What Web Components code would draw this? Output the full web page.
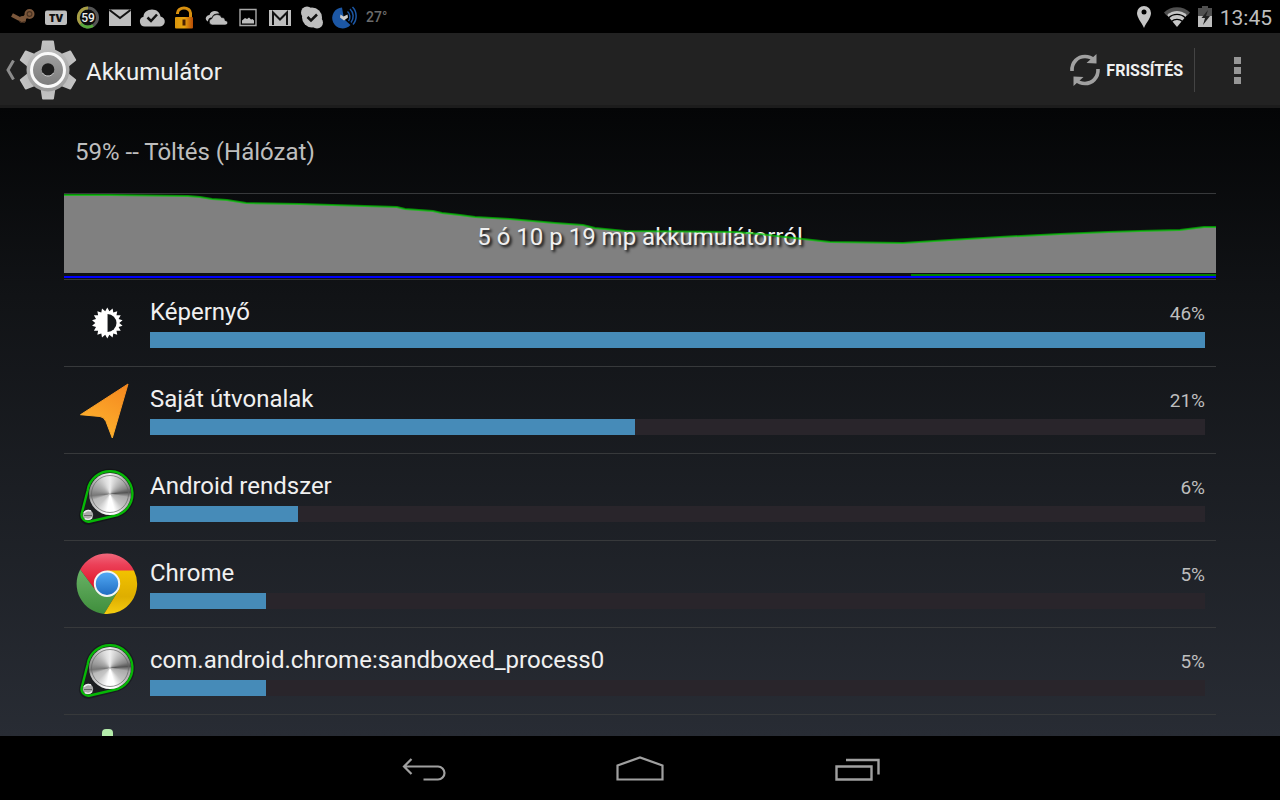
<!DOCTYPE html>
<html lang="hu">
<head>
<meta charset="UTF-8">
<meta name="viewport" content="width=device-width, initial-scale=1.0">
<title>Akkumulátor</title>
<style>
    :root {
        --text: #f0f0f0;
        --text-dim: #bebebe;
        --line: #37393b;
        --accent: #468bb8;
    }
    body {
        margin: 0;
        background: #000;
        color: var(--text);
        font-family: Roboto, "Noto Sans", sans-serif;
        font-size: 24px;
    }
</style>
</head>
<body>
<settings-screen></settings-screen>

<script>
// ==== Icons ====
// Points of a spiky circle, used by the display icon
function starPoints(cx, cy, outer, inner, spikes) {
    const points = [];
    for (let i = 0; i < spikes * 2; i++) {
        const r = i % 2 ? inner : outer;
        const a = Math.PI * i / spikes - Math.PI / 2;
        points.push((cx + r * Math.cos(a)).toFixed(2) + ',' + (cy + r * Math.sin(a)).toFixed(2));
    }
    return points.join(' ');
}

const gearTooth = '<path d="M25 .5h10q.8 0 .9.800l1.600 10.200h-15l1.600-10.200q.1-.8.9-.8z"/>';

const icons = {
    // status bar
    steam: { box: [32, 32], art: `
        <path d="M4 14l9.500 5M13 20l7-6.500" fill="none" stroke="#7b573b" stroke-width="4"/>
        <circle cx="14.500" cy="18.500" r="3.500" fill="#7b573b"/>
        <circle cx="21.500" cy="13" r="4" fill="#4a3322" stroke="#7b573b" stroke-width="2"/>
        <circle cx="21.500" cy="13" r="1.800" fill="#7b573b"/>
        <path d="M11 19.500a3.500 3.500 0 0 0 5.500 1" fill="none" stroke="#2b1d14"/>` },
    tv: { box: [32, 32], art: `
        <rect x="5" y="9.500" width="22" height="14.500" rx="2" fill="#bebebe"/>
        <text x="16" y="21" text-anchor="middle" font-family="Open Sans, sans-serif" font-size="11" font-weight="800" fill="#111">TV</text>` },
    level: { box: [32, 32], art: `
        <circle cx="16" cy="16.500" r="9.500" fill="#0c0c0c" stroke="#555" stroke-width="3"/>
        <path d="M16 7a9.500 9.500 0 0 0-7 16" fill="none" stroke="#a79e43" stroke-width="3"/>
        <path d="M9 23a9.500 9.500 0 0 0 12 1.500" fill="none" stroke="#56a83b" stroke-width="3"/>
        <text x="16" y="21" text-anchor="middle" font-family="Roboto, sans-serif" font-size="12" font-weight="500" fill="#eee">59</text>` },
    mail: { box: [32, 32], art: `
        <path d="M5 8.500h22V25H5z" fill="#bebebe"/>
        <path d="M5.500 9L16 17l10.500-8" fill="none" stroke="#111" stroke-width="2"/>` },
    cloudCheck: { box: [32, 32], art: `
        <path d="M9 25.500a5 5 0 0 1-1.500-9.800C7.500 11.500 11.500 8.500 16 8.500c4.500 0 8 2.800 8.500 7A5 5 0 0 1 23 25.500z" fill="#bebebe"/>
        <path d="M11.500 16.500l3.500 3.500 6-6.500" fill="none" stroke="#111" stroke-width="2.500"/>` },
    lock: { box: [32, 32], art: `
        <defs><linearGradient id="lock"><stop stop-color="#d8940c"/><stop offset=".5" stop-color="#e9a50f"/><stop offset="1" stop-color="#b84c06"/></linearGradient></defs>
        <path d="M9.500 13v-1a6.500 5 0 0 1 13 0v5" fill="none" stroke="#d8900f" stroke-width="3"/>
        <rect x="7" y="16" width="18" height="11.500" rx="1" fill="url(#lock)"/>
        <path d="M14.500 18.500h3v6h-3z" fill="#4a2202"/>` },
    clouds: { box: [32, 32], art: `
        <path d="M7 20a3.500 3.500 0 0 1 0-5c1-1 2-1 2.500-1 1-4.500 7.500-5.500 10-1.500-4-.5-7 1-7.500 4-3 0-4 2-4 4z" fill="#bebebe"/>
        <path d="M12 24a3.300 3.300 0 0 1 0-6.500c.5-4.500 8-5.500 9.500-1 3 0 3.500 1.500 3.500 3 3.500 0 3.500 4.500 0 4.500z" fill="#bebebe" stroke="#000" stroke-width=".6"/>` },
    image: { box: [32, 32], art: `
        <path d="M8 8.500h16v16H8z" fill="none" stroke="#a8a8a8" stroke-width="1.400"/>
        <path d="M10 22.500v-3l3-2.500 2 1 2-1.500 2 2 1.500-.5 1.500 1.500v3z" fill="#bebebe"/>` },
    gmail: { box: [32, 32], art: `
        <path d="M5 9h22v16H5z" fill="#bebebe"/>
        <path d="M9 24V11.500l7 7 7-7V24" fill="none" stroke="#111" stroke-width="2"/>` },
    skype: { box: [32, 32], art: `
        <circle cx="16" cy="16.500" r="10" fill="#bebebe"/>
        <circle cx="11" cy="11.500" r="6" fill="#bebebe"/>
        <circle cx="21" cy="21.500" r="6" fill="#bebebe"/>
        <path d="M11.500 16l3.500 3.500 6-6" fill="none" stroke="#111" stroke-width="2.500"/>` },
    dish: { box: [32, 32], art: `
        <path d="M14 6.500a10.500 10.500 0 1 0 8.500 17.500L16 18z" fill="#1c57a5"/>
        <path d="M12.500 13.500l3 2 4-2 .5 3-4 3-4-3z" fill="#ccc"/>
        <path d="M19.500 10.500a7 7 0 0 1 1 9.500M22 8a10 10 0 0 1 1 13.500M24.500 6a13 13 0 0 1 .5 17.500" fill="none" stroke="#1c57a5" stroke-width="1.500"/>` },
    pin: { box: [16, 32], art: `
        <path d="M8 27C5.500 21 1 17 1 12a7 7 0 0 1 14 0c0 5-4.500 9-7 15z" fill="#c6c6c6"/>
        <circle cx="8" cy="11" r="2.500" fill="#000"/>` },
    wifi: { box: [26, 32], art: `
        <path d="M0 11.500a18.500 18.500 0 0 1 26 0l-2.500 3a15 15 0 0 0-21 0z" fill="#505050"/>
        <path d="M3 14a14.500 14.500 0 0 1 20 0L13 26z" fill="#c6c6c6"/>
        <path d="M4.500 17a12 12 0 0 1 17 0M7.500 20.500a8 8 0 0 1 11 0" fill="none" stroke="#000" stroke-width="1.200"/>` },
    battery: { box: [14, 32], art: `
        <path d="M0 7h4V5h6v2h4v8H0z" fill="#505050"/>
        <path d="M0 15h14v11H0z" fill="#bebebe"/>
        <path d="M10 9L3.500 17H7l-2 7 7-9H8z" fill="#222"/>` },
    // action bar
    up: { box: [10, 20], art: `
        <path d="M8.500 .5L3 10l5.500 9.500" fill="none" stroke="#8c8c8c" stroke-width="3"/>` },
    gear: { box: [60, 60], art: `
        <defs>
            <linearGradient id="metal" x2="0" y2="60" gradientUnits="userSpaceOnUse"><stop stop-color="#c4c4c4"/><stop offset="1" stop-color="#939393"/></linearGradient>
            <linearGradient id="hub" x2="0" y2="1"><stop stop-color="#a0a0a0"/><stop offset="1" stop-color="#7c7c7c"/></linearGradient>
        </defs>
        <g fill="url(#metal)">
            ${[0, 60, 120, 180, 240, 300].map(a => `<g transform="rotate(${a} 30 30)">${gearTooth}</g>`).join('')}
            <circle cx="30" cy="30" r="21.500"/>
        </g>
        <circle cx="30" cy="30" r="16.500" fill="url(#hub)" stroke="#fafafa" stroke-width="3"/>
        <circle cx="30" cy="29.500" r="6.300" fill="#1d1d1d"/>
        <path d="M24.500 33a6.500 6.500 0 0 0 11 0" fill="none" stroke="#ccc"/>` },
    refresh: { box: [32, 36], art: `
        <g fill="none" stroke="#a0a0a0" stroke-width="3.600">
            <path d="M3 19C2.500 10 9 4.500 16 4.500c4 0 6.500 1 9 3.500"/>
            <path d="M29 17c.5 9-6 14.500-13 14.500-4 0-6.500-1-9-3.500"/>
        </g>
        <path d="M27.500 2v9.500l-10-.5zM4.500 34v-9.500l10 .5z" fill="#a0a0a0"/>` },
    more: { box: [8, 28], art: `
        <path d="M0 1h7v7H0zM0 11h7v7H0zM0 21h7v7H0z" fill="#969696"/>` },
    // list
    display: { box: [64, 64], art: `
        <polygon points="${starPoints(32.3, 32, 15.5, 12, 18)}" fill="#fff"/>
        <path d="M32.500 23a9 9 0 0 1 0 18z" fill="#14171a"/>
        <path d="M32.500 23v18" stroke="#999"/>` },
    arrow: { box: [64, 64], art: `
        <defs><linearGradient id="sun" x1=".8" y1="0" x2=".3" y2="1"><stop stop-color="#f58a20"/><stop offset="1" stop-color="#ffb52e"/></linearGradient></defs>
        <path d="M53 6L37.300 60 31 43.500q-2-4.500-6-5L5.500 36.700z" fill="url(#sun)" stroke="url(#sun)" stroke-linejoin="round"/>` },
    knob: { box: [64, 64], art: `
        <path d="M12.700 25.200A22.500 22.500 0 1 1 38.500 51L15 57A6.800 6.800 0 0 1 6.600 49z" fill="#1a1c1e" stroke="#000" stroke-opacity=".3" stroke-width="5"/>
        <path d="M12.700 25.200A22.500 22.500 0 1 1 38.500 51L15 56.500A6.800 6.800 0 0 1 6.600 49z" fill="#1c1e20" stroke="#06b806" stroke-width="2.400" stroke-linejoin="round"/>
        <foreignObject x="14" y="8" width="42" height="42">
            <div style="height: 42px; border-radius: 50%; background: conic-gradient(#eee, #ccc 25deg, #aaa 50deg, #888 70deg, #555 85deg, #aaa 100deg, #c4c4c4 135deg, #fff 165deg, #fff 190deg, #c8c8c8 225deg, #bbb 250deg, #777 265deg, #999 285deg, #b4b4b4 310deg, #ddd 340deg, #eee)"></div>
        </foreignObject>
        <circle cx="35" cy="29" r="18.500" fill="none" stroke="#666" stroke-opacity=".7"/>
        <circle cx="13" cy="50" r="5.200" fill="#aaa"/>
        <path d="M9 48a5 4 0 0 1 7-2M10 53.500a5 4 0 0 0 7-1" fill="none" stroke="#eee" stroke-width="1.500"/>
        <path d="M9 50.500h8" stroke="#666"/>` },
    chrome: { box: [64, 64], art: `
        <defs>
            <linearGradient id="red" x2="0" y2="1"><stop stop-color="#f0687c"/><stop offset=".3" stop-color="#ec4058"/><stop offset="1" stop-color="#dd0e20"/></linearGradient>
            <linearGradient id="green" x2="0" y2="1"><stop stop-color="#69b266"/><stop offset="1" stop-color="#3f8e3c"/></linearGradient>
            <linearGradient id="yellow" x2="0" y2="1"><stop stop-color="#f2c200"/><stop offset=".6" stop-color="#deae00"/><stop offset="1" stop-color="#f5cc10"/></linearGradient>
            <linearGradient id="blue" x2="0" y2="1"><stop stop-color="#53aaf6"/><stop offset="1" stop-color="#1f6cc0"/></linearGradient>
        </defs>
        <path d="M5.200 17.500A30.200 30.200 0 0 1 59 18.400L32 32 20.500 38.500z" fill="url(#red)"/>
        <path d="M5.200 17.500A30.200 30.200 0 0 0 29 61.900L43.500 38.300 32 32 20.500 38.300z" fill="url(#green)"/>
        <path d="M32 18.400H59A30.200 30.200 0 0 1 29 61.900L43.500 38.300z" fill="url(#yellow)"/>
        <circle cx="32" cy="31.700" r="12.200" fill="url(#blue)" stroke="#f4f4f4" stroke-width="2"/>` },
    flower: { box: [64, 64], art: `
        <rect x="27" y="3" width="11" height="24" rx="4" fill="#b4ecab"/>` },
    // navigation bar
    back: { box: [48, 32], art: `
        <path d="M3.500 14.500H38a6.500 6.500 0 0 1 0 13H23.500M11.500 7l-7.500 7.500 7.500 7.500" fill="none" stroke="#a0a0a0" stroke-width="2.200"/>` },
    home: { box: [48, 32], art: `
        <path d="M1.500 27.500V13.500L24 5.500l22.500 8v14z" fill="none" stroke="#a0a0a0" stroke-width="2.200"/>` },
    recents: { box: [48, 32], art: `
        <path d="M4.500 14.500h35v13h-35zM14 8h32.500v14.500" fill="none" stroke="#a0a0a0" stroke-width="2.400"/>` }
};

// ==== Web Component: AppIcon ====
class AppIcon extends HTMLElement {
    constructor() {
        super();
        this.attachShadow({ mode: 'open' });
    }

    connectedCallback() {
        const { box: [w, h], art } = icons[this.getAttribute('name')];
        this.shadowRoot.innerHTML = `
            <style>
                :host { display: block; flex: none; }
                svg { display: block; }
            </style>
            <svg width="${w}" height="${h}" viewBox="0 0 ${w} ${h}" aria-hidden="true">${art}</svg>
        `;
    }
}

// ==== Web Component: StatusBar ====
class StatusBar extends HTMLElement {
    constructor() {
        super();
        this.attachShadow({ mode: 'open' });
        const notices = ['steam', 'tv', 'level', 'mail', 'cloudCheck', 'lock', 'clouds', 'image', 'gmail', 'skype', 'dish'];
        this.shadowRoot.innerHTML = `
            <style>
                :host {
                    display: flex;
                    justify-content: space-between;
                    align-items: center;
                    height: 33px;
                    padding: 0 8px;
                    background: #000;
                    color: var(--text-dim);
                }
                div { display: flex; align-items: center; }
                .temp { font-size: 14px; font-weight: 500; color: #6c6c6c; margin-left: 6px; }
                .system { gap: 8px; }
                .system app-icon:first-child { margin-right: 4px; }
                time { font-size: 21px; line-height: 32px; padding-top: 2px; }
            </style>
            <div>
                ${notices.map(name => `<app-icon name="${name}"></app-icon>`).join('')}
                <span class="temp">27°</span>
            </div>
            <div class="system">
                <app-icon name="pin"></app-icon>
                <app-icon name="wifi"></app-icon>
                <app-icon name="battery"></app-icon>
                <time>13:45</time>
            </div>
        `;
    }
}

// ==== Web Component: ActionBar ====
class ActionBar extends HTMLElement {
    constructor() {
        super();
        this.attachShadow({ mode: 'open' });
        this.shadowRoot.innerHTML = `
            <style>
                :host {
                    display: flex;
                    align-items: center;
                    justify-content: space-between;
                    box-sizing: border-box;
                    height: 75px;
                    padding-top: 2px;
                    background: #222;
                    border-bottom: 3px solid #1c1c1c;
                }
                button {
                    display: flex;
                    align-items: center;
                    padding: 0;
                    border: 0;
                    background: none;
                    color: inherit;
                    font: inherit;
                }
                h1 { margin: 0; font-size: 24px; font-weight: 400; line-height: 32px; padding-top: 4px; }
                .up { gap: 3px; padding: 0 8px 0 5px; }
                .left, .right { display: flex; align-items: center; }
                .refresh {
                    gap: 5px;
                    height: 44px;
                    padding-right: 11px;
                    border-right: 1px solid #444;
                    font-size: 16px;
                    font-weight: 700;
                }
                .more { justify-content: center; width: 85px; height: 70px; }
            </style>
            <div class="left">
                <button class="up" aria-label="Vissza"><app-icon name="up"></app-icon><app-icon name="gear"></app-icon></button>
                <h1><slot></slot></h1>
            </div>
            <div class="right">
                <button class="refresh"><app-icon name="refresh"></app-icon>FRISSÍTÉS</button>
                <button class="more" aria-label="Továbbiak"><app-icon name="more"></app-icon></button>
            </div>
        `;
    }
}

// ==== Web Component: BatteryChart ====
const levelLine = '0,1 46,1 124,2 136,3 148,5 163,6 182,9 236,10 333,13 341,15 369,17 378,19 396,21 411,23 446,25 491,29 519,31 531,34 561,37 671,38 696,40 721,43 739,45 766,48 839,49 886,46 936,43 996,40 1044,38 1076,37 1116,36 1140,33 1152,33';

class BatteryChart extends HTMLElement {
    constructor() {
        super();
        this.attachShadow({ mode: 'open' });
        this.shadowRoot.innerHTML = `
            <style>
                :host {
                    display: grid;
                    border: solid var(--line);
                    border-width: 1px 0;
                }
                svg, span { grid-area: 1 / 1; }
                svg { display: block; width: 100%; height: 85px; }
                span {
                    place-self: center;
                    line-height: 32px;
                    text-shadow: 2px 2px 3px #000;
                }
                polyline { vector-effect: non-scaling-stroke; }
            </style>
            <svg viewBox="0 0 1152 85" preserveAspectRatio="none" aria-hidden="true">
                <polygon points="${levelLine} 1152,79 0,79" fill="#808080"/>
                <rect x="847" y="80" width="305" height="2" fill="#008000"/>
                <rect y="82" width="1152" height="2" fill="#00f"/>
            </svg>
            <span><slot></slot></span>
            <svg viewBox="0 0 1152 85" preserveAspectRatio="none" aria-hidden="true">
                <polyline points="${levelLine}" fill="none" stroke="#00c800" stroke-opacity=".7" stroke-width="2"/>
            </svg>
        `;
    }
}

// ==== Web Component: UsageRow ====
class UsageRow extends HTMLElement {
    constructor() {
        super();
        this.attachShadow({ mode: 'open' });
    }

    connectedCallback() {
        const share = this.getAttribute('share');
        const bar = this.getAttribute('bar');

        this.shadowRoot.innerHTML = `
            <style>
                :host {
                    display: flex;
                    align-items: center;
                    gap: 11px;
                    padding: 0 11px;
                    border-bottom: 1px solid var(--line);
                }
                .usage { flex: 1; padding: 18px 0; }
                .labels {
                    display: flex;
                    justify-content: space-between;
                    align-items: baseline;
                    height: 28px;
                    line-height: 28px;
                    margin-bottom: 6px;
                }
                .share { font-size: 19px; color: var(--text-dim); }
                progress {
                    display: block;
                    width: 100%;
                    height: 16px;
                    border: 0;
                    appearance: none;
                    background: #29252b;
                }
                progress::-webkit-progress-bar { background: #29252b; }
                progress::-webkit-progress-value { background: var(--accent); }
            </style>
            <app-icon name="${this.getAttribute('icon')}"></app-icon>
            <div class="usage">
                <div class="labels"><label for="bar"><slot></slot></label><span class="share">${share}</span></div>
                <progress id="bar" max="100" value="${bar}"></progress>
            </div>
        `;
    }
}

// ==== Web Component: NavBar ====
class NavBar extends HTMLElement {
    constructor() {
        super();
        this.attachShadow({ mode: 'open' });
        this.shadowRoot.innerHTML = `
            <style>
                :host {
                    display: flex;
                    justify-content: center;
                    height: 64px;
                    background: #000;
                }
                button {
                    display: flex;
                    align-items: center;
                    justify-content: center;
                    width: 216px;
                    padding: 0;
                    border: 0;
                    background: none;
                }
            </style>
            <button aria-label="Vissza"><app-icon name="back"></app-icon></button>
            <button aria-label="Kezdőképernyő"><app-icon name="home"></app-icon></button>
            <button aria-label="Legutóbbiak"><app-icon name="recents"></app-icon></button>
        `;
    }
}

// ==== Web Component: SettingsScreen ====
const usage = [
    { icon: 'display', name: 'Képernyő', share: '46%', bar: 100 },
    { icon: 'arrow', name: 'Saját útvonalak', share: '21%', bar: 46 },
    { icon: 'knob', name: 'Android rendszer', share: '6%', bar: 14 },
    { icon: 'chrome', name: 'Chrome', share: '5%', bar: 11 },
    { icon: 'knob', name: 'com.android.chrome:sandboxed_process0', share: '5%', bar: 11 },
    { icon: 'flower', name: '', share: '', bar: 8 }
];

class SettingsScreen extends HTMLElement {
    constructor() {
        super();
        this.attachShadow({ mode: 'open' });
        this.shadowRoot.innerHTML = `
            <style>
                :host {
                    display: flex;
                    flex-direction: column;
                    height: 100vh;
                }
                status-bar, action-bar, nav-bar { flex: none; }
                main {
                    flex: 1;
                    min-height: 0;
                    overflow: hidden;
                    padding: 0 5%;
                    background: linear-gradient(#040506, #111316 30%, #282c34);
                }
                .summary {
                    margin: 0;
                    padding: 28px 11px 25px;
                    line-height: 32px;
                    color: var(--text-dim);
                }
            </style>
            <status-bar></status-bar>
            <action-bar>Akkumulátor</action-bar>
            <main>
                <p class="summary">59% -- Töltés (Hálózat)</p>
                <battery-chart>5 ó 10 p 19 mp akkumulátorról</battery-chart>
                ${usage.map(u => `<usage-row icon="${u.icon}" share="${u.share}" bar="${u.bar}">${u.name}</usage-row>`).join('')}
            </main>
            <nav-bar></nav-bar>
        `;
    }
}

// ==== Define Custom Elements ====
customElements.define('app-icon', AppIcon);
customElements.define('status-bar', StatusBar);
customElements.define('action-bar', ActionBar);
customElements.define('battery-chart', BatteryChart);
customElements.define('usage-row', UsageRow);
customElements.define('nav-bar', NavBar);
customElements.define('settings-screen', SettingsScreen);
</script>
</body>
</html>
